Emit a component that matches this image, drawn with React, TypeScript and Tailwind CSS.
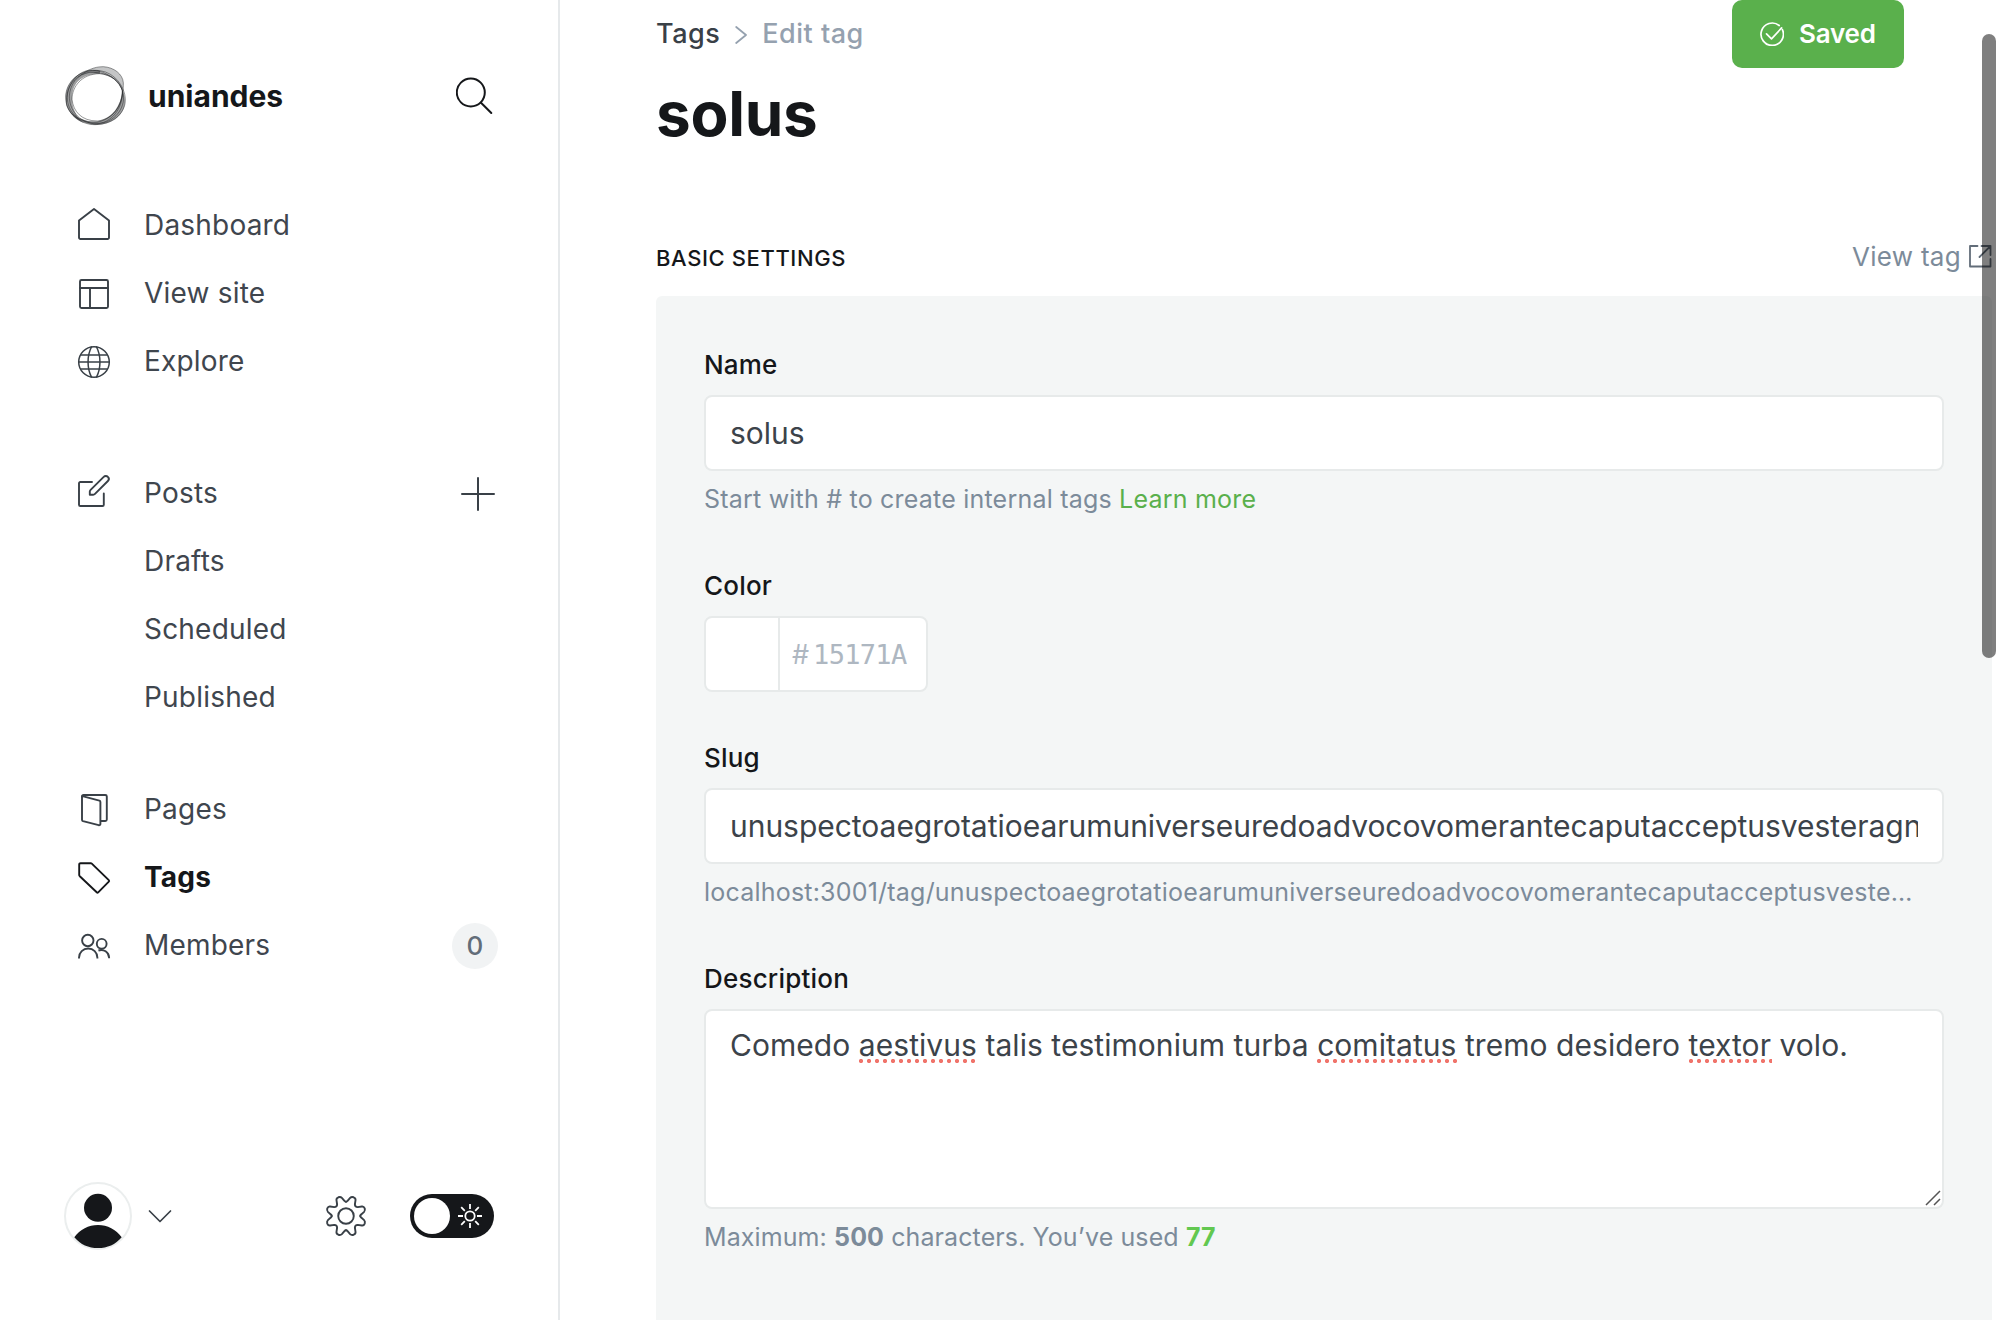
import React from "react";

type IconProps = { children: React.ReactNode; className?: string };

function NavIcon({ children, className = "" }: IconProps) {
  return (
    <svg
      viewBox="0 0 32 32"
      className={`h-8 w-8 shrink-0 overflow-visible ${className}`}
      fill="none"
      stroke="currentColor"
      strokeWidth="1.9"
      strokeLinecap="round"
      strokeLinejoin="round"
    >
      {children}
    </svg>
  );
}

const HomeIcon = () => (
  <NavIcon className="mb-[4px]">
    <path d="M1 12.6 16 1l15 11.6V29.500a1.500 1.500 0 0 1-1.500 1.500h-27A1.500 1.500 0 0 1 1 29.500Z" />
  </NavIcon>
);

const LayoutIcon = () => (
  <NavIcon>
    <rect x="2" y="2" width="28" height="28" rx="1.500" />
    <path d="M2 10h28M12 10v20" />
  </NavIcon>
);

const GlobeIcon = () => (
  <NavIcon>
    <g strokeWidth="1.500">
      <circle cx="16" cy="16" r="15.300" />
      <path d="M.7 16h30.600M2.800 9h26.400M2.800 23h26.400M13.500 1c-4.600 8.500-4.600 21.500 0 30M18.500 1c4.600 8.500 4.600 21.500 0 30" />
    </g>
  </NavIcon>
);

const EditIcon = () => (
  <NavIcon className="mb-[6px]">
    <path d="M14 7H2.300A1.300 1.300 0 0 0 1 8.300v21.400A1.300 1.300 0 0 0 2.300 31H24.500a1.300 1.300 0 0 0 1.300-1.300V18.500" />
    <path d="M11.800 19.800v-3.200c0-.7.300-1.300.8-1.800L25.700 1.900a2.900 2.900 0 0 1 4.200 0 2.900 2.900 0 0 1 0 4.100L17 18.900c-.5.500-1.100.800-1.800.8Z" />
  </NavIcon>
);

const PagesIcon = () => (
  <NavIcon>
    <path d="M4 2.400v23.400c0 .7.400 1.200 1 1.400l15.700 4c.9.200 1.700-.4 1.700-1.300V8c0-.7-.4-1.200-1-1.400L5.300 2.300" />
    <path d="M4 2.600C4 1.800 4.600 1 5.500 1h21.800c.9 0 1.500.7 1.500 1.500v23c0 .9-.6 1.500-1.500 1.500h-4.500" />
  </NavIcon>
);

const TagIcon = () => (
  <NavIcon>
    <path d="M1.200 2.500c0-.8.600-1.300 1.300-1.300h10.300c.4 0 .7.200 1 .5l17 16.400c.5.500.5 1 0 1.500L20.200 30.300c-.5.500-1 .5-1.500 0L1.800 14.200c-.4-.4-.6-.8-.6-1.200Z" />
  </NavIcon>
);

const MembersIcon = () => (
  <NavIcon className="mb-px">
    <g strokeLinecap="butt">
      <circle cx="9.800" cy="10.500" r="5.700" />
      <path d="M1 28.500v-.8a9.200 9.200 0 0 1 18.400 0v.8" />
      <circle cx="23.700" cy="13.800" r="4.900" />
      <path d="M31.100 28.300v-.6a7.900 7.900 0 0 0-10.700-7.200" />
    </g>
  </NavIcon>
);

function Logo() {
  return (
    <svg viewBox="0 0 64 64" className="h-16 w-16" fill="none">
      <g transform="translate(-23 -24) scale(.33333)">
        <path
          d="M118 108C140 92 160 80 190 80 222 82 248 102 250 128 250 142 248 150 247 152 238 122 210 103 150 97Z"
          fill="#15171a"
          fillOpacity=".25"
        />
        <path
          d="M180 92C120 84 77 125 77 172 77 208 98 236 132 250 106 228 95 200 96 172 98 130 122 102 180 101Z"
          fill="#15171a"
          fillOpacity=".42"
        />
        <path
          d="M247 150C262 180 257 215 226 238 205 253 180 257 160 254 130 250 108 238 94 218 120 240 150 247 176 243 215 234 243 200 247 150Z"
          fill="#15171a"
          fillOpacity=".42"
        />
        <g stroke="#15171a" strokeWidth="2.200" strokeOpacity=".6">
          <path d="M118 108C140 92 160 80 190 80 222 82 248 102 250 128 251 170 238 232 172 247 115 250 82 215 82 172 82 145 96 122 118 108Z" />
          <path d="M180 92C120 84 77 125 77 172 77 220 120 254 165 254 225 252 258 215 256 176 254 140 225 98 180 92Z" />
          <path d="M150 97C110 102 90 135 88 168 88 210 115 245 165 252 215 250 250 205 247 152 238 122 210 96 150 97Z" />
          <path d="M178 101C125 102 96 140 96 178 100 215 125 243 172 243 220 238 248 195 247 152 240 125 215 104 178 101Z" />
          <path d="M145 91C180 88 225 105 246 148 262 190 235 235 195 247 150 258 96 240 80 196 74 145 105 98 145 91Z" />
        </g>
      </g>
    </svg>
  );
}

function NavItem({
  icon,
  label,
  active,
  trailing,
}: {
  icon?: React.ReactNode;
  label: string;
  active?: boolean;
  trailing?: React.ReactNode;
}) {
  return (
    <li className="flex h-[68px] items-center">
      <span
        className={
          active
            ? "flex w-[66px] text-[#15171a]"
            : "flex w-[66px] text-[#394047]"
        }
      >
        {icon}
      </span>
      <span
        className={
          active
            ? "pb-[2px] text-[28px] leading-none font-bold tracking-[0.2px] text-[#15171a]"
            : "pb-[2px] text-[28px] leading-none tracking-[0.2px] text-[#3f464e]"
        }
      >
        {label}
      </span>
      {trailing}
    </li>
  );
}

function Gear() {
  const quarter =
    "M0-45Q3-45 5-48L13-57Q17-61 24-59Q31-56 30-50L28-37Q28-28 37-28L50-30Q56-31 59-24Q61-17 57-13L48-5Q45-3 45 0";
  return (
    <svg
      viewBox="-63 -63 126 126"
      className="h-10 w-10 overflow-visible text-[#394047]"
      fill="none"
      stroke="currentColor"
      strokeWidth="6"
      strokeLinecap="round"
    >
      <path d={quarter} />
      <path d={quarter} transform="rotate(90)" />
      <path d={quarter} transform="rotate(180)" />
      <path d={quarter} transform="rotate(270)" />
      <circle r="24.500" />
    </svg>
  );
}

function Sidebar() {
  return (
    <aside className="flex h-full w-[560px] shrink-0 flex-col border-r-2 border-[#e6e9eb] bg-white">
      <div className="mt-16 flex h-16 items-center pr-[64px] pl-[63px]">
        <Logo />
        <span className="ml-[21px] text-[30px] leading-none font-bold text-[#15171a]">
          uniandes
        </span>
        <svg
          viewBox="0 0 38 38"
          className="ml-auto h-[38px] w-[38px]"
          fill="none"
          stroke="#15171a"
          strokeWidth="2"
          strokeLinecap="round"
        >
          <circle cx="14.800" cy="15.500" r="14" />
          <path d="m25 25.700 10.300 10.300" />
        </svg>
      </div>

      <nav className="mt-16 pr-[58px] pl-[78px]">
        <ul>
          <NavItem icon={<HomeIcon />} label="Dashboard" />
          <NavItem icon={<LayoutIcon />} label="View site" />
          <NavItem icon={<GlobeIcon />} label="Explore" />
        </ul>
        <ul className="mt-16">
          <NavItem
            icon={<EditIcon />}
            label="Posts"
            trailing={
              <svg
                viewBox="0 0 34 34"
                className="mr-[5px] ml-auto h-[34px] w-[34px]"
                stroke="#394047"
                strokeWidth="2"
                strokeLinecap="round"
              >
                <path d="M17 1v32M1 17h32" />
              </svg>
            }
          />
          <NavItem label="Drafts" />
          <NavItem label="Scheduled" />
          <NavItem label="Published" />
        </ul>
        <ul className="mt-11">
          <NavItem icon={<PagesIcon />} label="Pages" />
          <NavItem icon={<TagIcon />} label="Tags" active />
          <NavItem
            icon={<MembersIcon />}
            label="Members"
            trailing={
              <span className="mr-[2px] ml-auto flex h-[46px] w-[46px] items-center justify-center rounded-full bg-[#f1f3f4] text-[26px] leading-none font-medium text-[#626d79]">
                0
              </span>
            }
          />
        </ul>
      </nav>

      <div className="mt-auto mb-[70px] flex h-[68px] items-center pr-[64px] pl-[64px]">
        <svg viewBox="0 0 68 68" className="h-[68px] w-[68px]">
          <circle
            cx="34"
            cy="34"
            r="33"
            fill="#fff"
            stroke="#ebeeee"
            strokeWidth="2"
          />
          <circle cx="34" cy="25.800" r="14" fill="#15171a" />
          <path
            d="M10.300 55.200C16 47.500 24.500 43 34 43s18 4.500 23.700 12.200C51.500 62.500 43.500 66 34 66s-17.500-3.500-23.700-10.800Z"
            fill="#15171a"
          />
        </svg>
        <svg
          viewBox="0 0 24 14"
          className="ml-4 h-[14px] w-6"
          fill="none"
          stroke="#394047"
          strokeWidth="1.700"
          strokeLinecap="round"
          strokeLinejoin="round"
        >
          <path d="m1.500 2 10.500 10.500L22.500 2" />
        </svg>
        <span className="mr-11 ml-auto flex">
          <Gear />
        </span>
        <span className="flex h-11 w-[84px] items-center justify-between rounded-full bg-[#15171a] pr-3 pl-1">
          <span className="h-9 w-9 rounded-full bg-white" />
          <svg
            viewBox="-12 -12 24 24"
            className="h-6 w-6"
            fill="none"
            stroke="#fff"
            strokeWidth="1.800"
          >
            <circle r="4.700" />
            <path d="M0-12v5M0 7v5M-12 0h5M7 0h5M-8.800-8.800l3.600 3.600M5.200 5.200l3.600 3.600M-8.800 8.800l3.600-3.600M5.200-5.200l3.600-3.600" />
          </svg>
        </span>
      </div>
    </aside>
  );
}

function Misspelled({ children }: { children: React.ReactNode }) {
  return (
    <span className="relative inline-block">
      {children}
      <span className="absolute right-[-1px] bottom-[2px] left-0 h-1 bg-[radial-gradient(circle_at_2px_2px,#f0746b_1.800px,transparent_2.400px)] bg-[length:8px_4px] bg-repeat-x" />
    </span>
  );
}

function Label({ children }: { children: React.ReactNode }) {
  return (
    <div className="-mt-1 mb-[6px] h-10 text-[26px] leading-8 font-medium tracking-[0.2px] text-[#15171a]">
      {children}
    </div>
  );
}

function Box({
  children,
  className = "",
}: {
  children?: React.ReactNode;
  className?: string;
}) {
  return (
    <div
      className={`flex shrink-0 rounded-[8px] border-2 border-[#e7eaea] bg-white text-[30px] text-[#3c434a] ${className}`}
    >
      {children}
    </div>
  );
}

function Hint({ children }: { children: React.ReactNode }) {
  return (
    <p className="mt-[12px] mb-[4px] h-8 max-w-[1212px] truncate text-[25px] leading-8 tracking-[0.21px] text-[#7c8b9a]">
      {children}
    </p>
  );
}

export default function App() {
  return (
    <div className="relative flex h-[1320px] w-[2000px] overflow-hidden bg-white font-['Inter',sans-serif]">
      <Sidebar />

      <main className="flex min-w-0 flex-1 flex-col pr-2 pl-24">
        <header className="flex h-[148px] shrink-0 items-start justify-between pr-[88px]">
          <div>
            <div className="flex h-[68px] items-center pb-[2px] text-[27px] leading-none tracking-[0.5px]">
              <span className="font-medium text-[#394047]">Tags</span>
              <svg
                viewBox="0 0 12 18"
                className="mt-[4px] mr-[15px] ml-[15px] h-[18px] w-3"
                fill="none"
                stroke="#95a1af"
                strokeWidth="1.800"
                strokeLinecap="round"
                strokeLinejoin="round"
              >
                <path d="m1.200 1 9.800 8-9.800 8" />
              </svg>
              <span className="font-medium text-[#95a1af]">Edit tag</span>
            </div>
            <h1 className="mt-[11px] text-[62px] leading-[70px] font-bold tracking-[-0.3px] text-[#15171a]">
              solus
            </h1>
          </div>
          <button className="flex h-[68px] w-[172px] items-center rounded-[10px] bg-[#5ab04c] pl-7 text-[26px] leading-none font-semibold tracking-[-0.2px] text-white">
            <svg
              viewBox="0 0 24 24"
              className="mr-[15px] h-6 w-6"
              fill="none"
              stroke="currentColor"
              strokeWidth="1.700"
              strokeLinecap="round"
              strokeLinejoin="round"
            >
              <path d="M19.200 3.500A11.200 11.200 0 1 0 22.400 7.600" />
              <path d="m6.500 11.800 5 5L21.600 5.900" />
            </svg>
            Saved
          </button>
        </header>

        <div className="mt-[92px] flex h-8 shrink-0 items-center justify-between">
          <h4 className="mt-[4px] text-[22px] leading-none font-medium tracking-[0.6px] text-[#15171a]">
            BASIC SETTINGS
          </h4>
          <a className="flex items-center text-[26px] leading-none tracking-[0.3px] text-[#7c8b9a]">
            <span className="mt-[2px]">View tag</span>
            <svg
              viewBox="0 0 24 24"
              className="ml-[7px] h-6 w-6"
              fill="none"
              stroke="#626d79"
              strokeWidth="1.800"
              strokeLinecap="round"
              strokeLinejoin="round"
            >
              <path d="M9.500 2H2v20.500h20.500V15M13.500 2h9v9M22.500 2 11.500 13" />
            </svg>
          </a>
        </div>

        <section className="mt-6 flex-1 rounded-t-[6px] bg-[#f4f6f6] pt-[57px] pr-12 pl-12">
          <Label>Name</Label>
          <Box className="h-[76px] items-center px-6">solus</Box>
          <Hint>
            Start with # to create internal tags{" "}
            <span className="text-[#5ab04c]">Learn more</span>
          </Hint>

          <div className="h-[55px]" />
          <Label>Color</Label>
          <Box className="h-[76px] w-[224px] items-stretch">
            <div className="w-[74px] border-r-2 border-[#e7eaea]" />
            <div className="flex items-center pt-[2px] pl-3 text-[27px] text-[#aeb7c1]">
              #
              <span className="ml-1 font-['DejaVu_Sans_Mono',monospace] tracking-[-0.7px]">
                15171A
              </span>
            </div>
          </Box>

          <div className="h-[54px]" />
          <Label>Slug</Label>
          <Box className="h-[76px] items-center px-6">
            <span className="overflow-hidden leading-[40px] tracking-[-0.03px] whitespace-nowrap">
              unuspectoaegrotatioearumuniverseuredoadvocovomerantecaputacceptusvesteragn
            </span>
          </Box>
          <Hint>
            localhost:3001/tag/unuspectoaegrotatioearumuniverseuredoadvocovomerantecaputacceptusvesteragn
          </Hint>

          <div className="h-[55px]" />
          <Label>Description</Label>
          <Box className="relative h-[200px] px-6 pt-[14px] leading-[40px]">
            <p className="tracking-[0.05px]">
              Comedo <Misspelled>aestivus</Misspelled> talis testimonium turba{" "}
              <Misspelled>comitatus</Misspelled> tremo desidero{" "}
              <Misspelled>textor</Misspelled> volo.
            </p>
            <svg
              viewBox="0 0 16 16"
              className="absolute right-[1px] bottom-[1px] h-4 w-4"
              stroke="#555"
              strokeWidth="1.500"
            >
              <path d="M1 15 15 1M9 15l6-6" />
            </svg>
          </Box>
          <Hint>
            <span className="tracking-[0.1px]">
              Maximum: <b className="font-bold">500</b> characters. You’ve used{" "}
              <b className="font-bold text-[#62c850]">77</b>
            </span>
          </Hint>
        </section>
      </main>

      <div className="absolute top-[34px] right-1 h-[624px] w-[14px] rounded-full bg-black/50" />
    </div>
  );
}
